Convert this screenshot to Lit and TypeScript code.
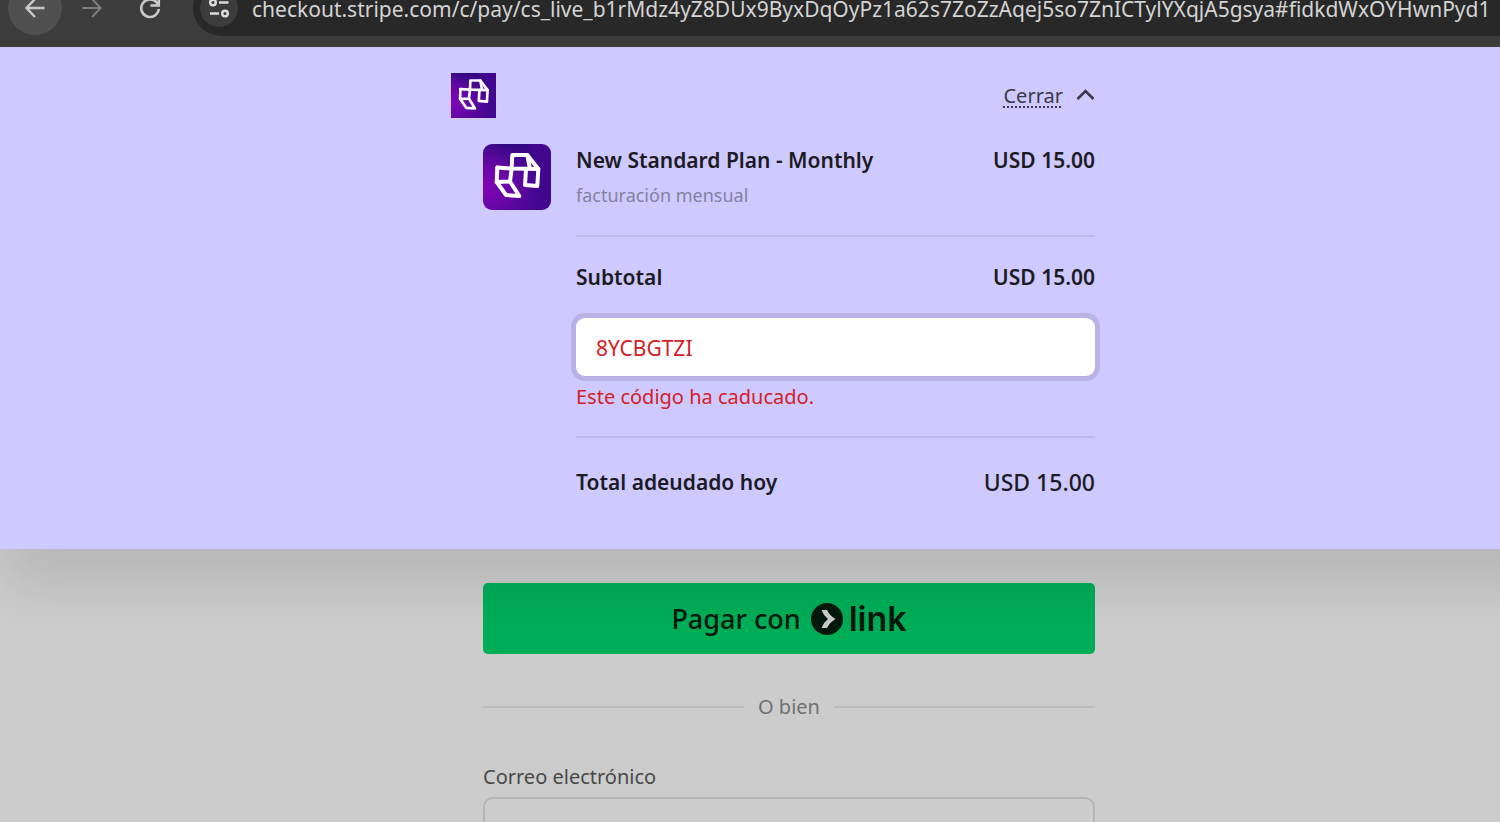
import { LitElement, html, css } from "lit";
import { customElement, property, state } from "lit/decorators.js";

@customElement("brand-mark")
export class BrandMark extends LitElement {
  static styles = css`
    :host {
      display: block;
      overflow: hidden;
      background: radial-gradient(circle at 5% 65%, #8004b4 0%, #6a06a8 25%, rgba(62, 6, 140, 0) 70%),
        radial-gradient(circle at 25% 0%, #1c0a70 0%, rgba(28, 10, 112, 0) 45%), #43078f;
    }
    .mark {
      display: block;
      width: 100%;
      height: 100%;
    }
  `;

  render() {
    return html`
      <svg class="mark" viewBox="0 0 68 66" preserveAspectRatio="none" aria-hidden="true"
        fill="none" stroke="#fff" stroke-width="4" stroke-linejoin="round" stroke-linecap="round">
        <path d="M28.700 24.500L29.300 11H44.300L55.300 25L54.300 42L42 41L43 25" />
        <path d="M44.300 11L47 25M14.300 23.500L28.700 24.500L55.300 25" />
        <path d="M14.300 23.500L13.700 38L27 37.500L28.700 24.500" />
        <path d="M13.700 38L23 51L36.300 52L27 37.500" />
      </svg>
    `;
  }
}

@customElement("browser-bar")
export class BrowserBar extends LitElement {
  @property() url = "";

  static styles = css`
    :host {
      display: block;
      height: 47px;
      overflow: hidden;
      background: #3c3c3c;
    }
    .bar {
      display: flex;
      align-items: center;
      height: 78px;
      margin-top: -31px;
      padding-left: 8px;
    }
    .nav {
      display: flex;
      flex: none;
      align-items: center;
      justify-content: center;
      width: 54px;
      height: 54px;
      padding: 0;
      border: 0;
      border-radius: 50%;
      background: none;
      color: #c9c9c9;
    }
    .nav.active {
      background: #505050;
    }
    .nav.off {
      margin-left: 3px;
      color: #7c7c7c;
    }
    .nav.reload {
      margin-left: 4px;
    }
    .omnibox {
      display: flex;
      flex: 1;
      align-items: center;
      min-width: 0;
      height: 56px;
      margin-left: 16px;
      padding-left: 7px;
      border-radius: 28px 0 0 28px;
      background: #282828;
    }
    .site {
      display: flex;
      flex: none;
      align-items: center;
      justify-content: center;
      width: 38px;
      height: 38px;
      padding: 0;
      border: 0;
      border-radius: 50%;
      background: #3c3c3c;
      color: #dcdcdc;
    }
    .url {
      flex: 1;
      min-width: 0;
      margin-left: 14px;
      padding: 2px 0 0;
      border: 0;
      outline: 0;
      background: none;
      color: #d4d4d4;
      font: 21px/32px "Noto Sans", sans-serif;
    }
  `;

  render() {
    return html`
      <nav class="bar" aria-label="Navegador">
        <button class="nav active" aria-label="Atrás">
          <svg width="24" height="24" viewBox="0 0 24 24" fill="none" stroke="currentColor" stroke-width="2.400">
            <path d="M21.500 12H4M12 3L3.500 12L12 21" />
          </svg>
        </button>
        <button class="nav off" aria-label="Adelante">
          <svg width="24" height="24" viewBox="0 0 24 24" fill="none" stroke="currentColor" stroke-width="2.200">
            <path d="M2.500 12H20M12 3L20.500 12L12 21" />
          </svg>
        </button>
        <button class="nav reload" aria-label="Recargar">
          <svg width="24" height="24" viewBox="0 0 24 24" fill="none" stroke="currentColor" stroke-width="2.600">
            <path d="M20.800 13A8.800 8.800 0 1 1 18.500 6.200L20.500 9" />
            <path d="M20.800 1V9.500H12.500" />
          </svg>
        </button>
        <div class="omnibox">
          <button class="site" aria-label="Información del sitio">
            <svg width="24" height="24" viewBox="0 0 24 24" fill="none" stroke="currentColor" stroke-width="2.400">
              <circle cx="6" cy="6.500" r="2.800" />
              <path d="M12 6.500H21.500M3 17.500H12" />
              <circle cx="18" cy="17.500" r="2.800" />
            </svg>
          </button>
          <input class="url" aria-label="Dirección" .value=${this.url} />
        </div>
      </nav>
    `;
  }
}

@customElement("app-root")
export class AppRoot extends LitElement {
  @state() private code = "8YCBGTZI";

  static styles = css`
    :host {
      display: block;
      height: 100vh;
      overflow: hidden;
      background: #ccc;
      color: #1c1b24;
      font-family: "Noto Sans", sans-serif;
      font-size: 20px;
      line-height: 28px;
    }
    button,
    input {
      font-family: inherit;
    }
    /* The checkout page runs on past the right edge of the window. */
    .page {
      width: calc(100% + 78px);
    }
    .summary {
      position: relative;
      z-index: 1;
      padding: 26px 0 51px;
      background: #cec9ff;
      box-shadow: 0 42px 50px -4px rgba(0, 0, 0, 0.1);
    }
    .column {
      box-sizing: border-box;
      width: 612px;
      max-width: 100%;
      margin: 0 auto;
    }
    .top {
      display: flex;
      align-items: center;
      justify-content: space-between;
      margin: 0 0 26px -32px;
    }
    .logo {
      width: 45px;
      height: 45px;
    }
    .close {
      display: flex;
      align-items: center;
      gap: 13px;
      padding: 0;
      border: 0;
      background: none;
      color: #3a3848;
      font-size: 20px;
      line-height: 28px;
    }
    .close-text {
      text-decoration: underline dotted 2px;
      text-underline-offset: 4px;
    }
    .order {
      display: grid;
      grid-template-columns: 68px 1fr;
      column-gap: 25px;
    }
    .thumb {
      width: 68px;
      height: 66px;
      border-radius: 9px;
    }
    .row {
      display: flex;
      justify-content: space-between;
      font-size: 21px;
      line-height: 32px;
      font-weight: 600;
    }
    .interval {
      margin: 5px 0 0;
      color: #85819f;
      font-size: 18px;
    }
    .product {
      padding-bottom: 26px;
      border-bottom: 2px solid #beb8ec;
    }
    .promo {
      padding: 24px 0 25px;
      border-bottom: 2px solid #beb8ec;
    }
    .code {
      box-sizing: border-box;
      display: block;
      width: 100%;
      height: 58px;
      margin: 25px 0 7px;
      padding: 2px 20px 0;
      border: 0;
      border-radius: 9px;
      outline: 0;
      background: #fff;
      box-shadow: 0 0 0 5px #bab2e6;
      color: #d32027;
      font-size: 21px;
    }
    .error {
      margin: 0;
      color: #d32027;
    }
    .total {
      padding-top: 28px;
    }
    .amount {
      font-size: 23px;
      font-weight: 500;
    }
    .pay {
      display: flex;
      align-items: center;
      justify-content: center;
      width: 100%;
      height: 71px;
      margin-top: 34px;
      padding: 0;
      border: 0;
      border-radius: 5px;
      background: #00ad57;
      color: #04190d;
      font-size: 27px;
      font-weight: 500;
    }
    .coin {
      margin: 0 6px 0 10px;
    }
    .link {
      font-family: "Inter", sans-serif;
      font-size: 34px;
      font-weight: 600;
    }
    .or {
      display: flex;
      align-items: center;
      gap: 14px;
      margin: 39px 0 42px;
      color: #707070;
    }
    .or::before,
    .or::after {
      content: "";
      flex: 1;
      height: 2px;
      background: #bbb;
    }
    .label {
      display: block;
      margin-bottom: 6px;
      color: #484848;
    }
    .email {
      box-sizing: border-box;
      width: 100%;
      height: 60px;
      padding: 0 20px;
      border: 2px solid #b5b5b5;
      border-radius: 10px;
      background: #cdcdcd;
      font-size: 20px;
    }
  `;

  private onCode(e: Event) {
    this.code = (e.target as HTMLInputElement).value;
  }

  render() {
    return html`
      <browser-bar
        url="checkout.stripe.com/c/pay/cs_live_b1rMdz4yZ8DUx9ByxDqOyPz1a62s7ZoZzAqej5so7ZnICTylYXqjA5gsya#fidkdWxOYHwnPyd1"
      ></browser-bar>
      <div class="page">
        <section class="summary">
          <div class="column">
            <header class="top">
              <brand-mark class="logo"></brand-mark>
              <button class="close">
                <span class="close-text">Cerrar</span>
                <svg width="19" height="14" viewBox="0 0 19 14" fill="none" stroke="currentColor" stroke-width="2.600">
                  <path d="M1.500 10L9.500 2L17.500 10" />
                </svg>
              </button>
            </header>
            <div class="order">
              <brand-mark class="thumb"></brand-mark>
              <div>
                <div class="product">
                  <div class="row"><span>New Standard Plan - Monthly</span><span>USD 15.00</span></div>
                  <p class="interval">facturación mensual</p>
                </div>
                <div class="promo">
                  <div class="row"><span>Subtotal</span><span>USD 15.00</span></div>
                  <input class="code" aria-label="Código promocional" aria-invalid="true"
                    aria-describedby="code-error" .value=${this.code} @input=${this.onCode} />
                  <p class="error" id="code-error">Este código ha caducado.</p>
                </div>
                <div class="row total">
                  <span>Total adeudado hoy</span><span class="amount">USD 15.00</span>
                </div>
              </div>
            </div>
          </div>
        </section>
        <main class="column">
          <button class="pay">
            <span>Pagar con</span>
            <svg class="coin" width="32" height="32" viewBox="0 0 32 32" aria-hidden="true">
              <circle cx="16" cy="16" r="16" fill="#04190d" />
              <path d="M10.500 7H16Q18.500 12.500 24.500 16Q18.500 19.500 16 25H10.500Q12.500 19.500 17 16Q12.500 12.500 10.500 7Z" fill="#ccc" />
            </svg>
            <span class="link">link</span>
          </button>
          <div class="or">O bien</div>
          <label class="label" for="email">Correo electrónico</label>
          <input class="email" id="email" type="email" />
        </main>
      </div>
    `;
  }
}
